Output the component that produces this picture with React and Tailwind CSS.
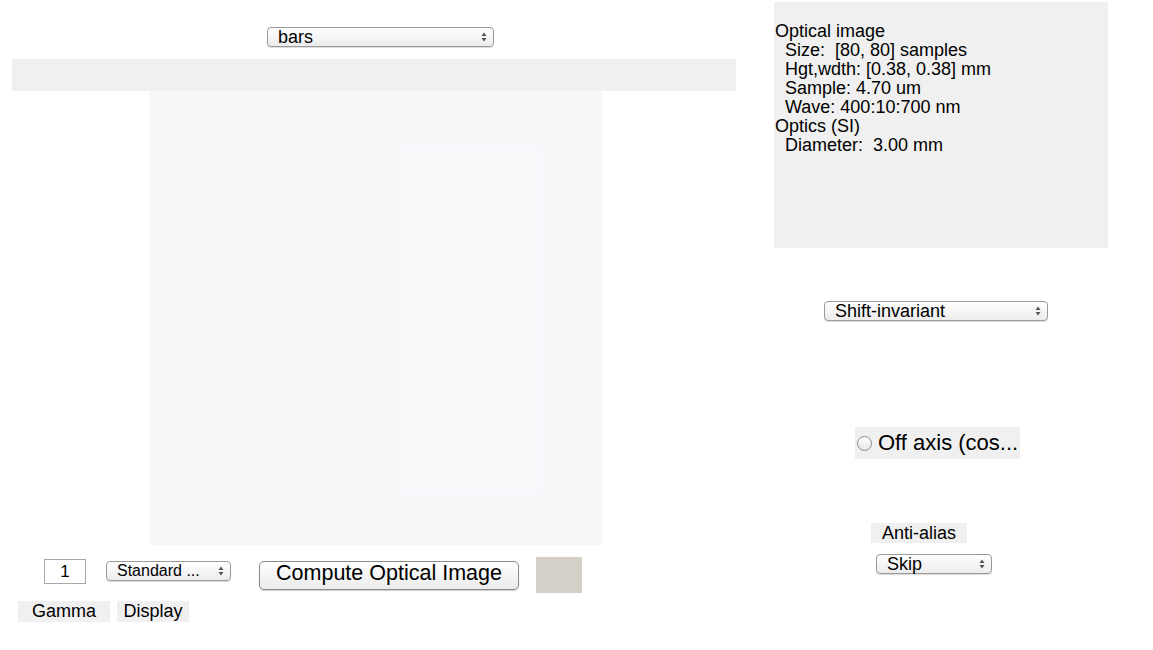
import React from "react";

function MacSelect({ label, className = "", textClass = "text-[18px]" }) {
  return (
    <div
      className={`flex items-center justify-between rounded-[4px] border border-[#9a9a9a] bg-gradient-to-b from-white to-[#ececec] pl-[10px] pr-[6px] shadow-[0_1px_1px_rgba(0,0,0,0.15)] ${className}`}
    >
      <span className={`${textClass} leading-none text-black`}>{label}</span>
      <svg width="6" height="10" viewBox="0 0 6 10">
        <path d="M3 0.5 L5.5 4 L0.5 4 Z" fill="#555" />
        <path d="M3 9.5 L5.5 6 L0.5 6 Z" fill="#555" />
      </svg>
    </div>
  );
}

export default function App() {
  return (
    <div
      className="flex h-[650px] w-[1153px] bg-white text-black"
      style={{ fontFamily: '"Liberation Sans", Arial, sans-serif' }}
    >
      {/* Left column */}
      <div className="flex w-[774px] flex-col">
        <div className="mt-[27px] flex">
          <MacSelect label="bars" className="ml-[267px] h-[20px] w-[227px]" />
        </div>
        <div className="ml-[12px] mt-[12px] h-[32px] w-[724px] bg-[#f0f0f0]" />
        <div className="ml-[149px] flex h-[454px] w-[453px] bg-[#f8f8f8]">
          <div className="ml-[244px] mt-[36px] flex h-[385px] w-[152px] bg-[#f8f8fb]">
            <div className="mx-[5px] my-[18px] flex-1 border border-[#f6f6fa] bg-[#f9f9fc]" />
          </div>
        </div>
        <div className="mt-[12px] flex items-start">
          <div className="ml-[44px] mt-[2px] flex h-[25px] w-[42px] items-center justify-center border border-[#a8a8a8] bg-white text-[17px]">
            1
          </div>
          <MacSelect
            label="Standard ..."
            className="ml-[20px] mt-[4px] h-[20px] w-[125px]"
            textClass="text-[16px]"
          />
          <button className="ml-[28px] mt-[4px] flex h-[29px] w-[260px] items-center justify-center rounded-[5px] border border-[#8a8a8a] bg-gradient-to-b from-white to-[#ebebeb] pb-[3px] text-[21.5px] leading-none shadow-[0_1px_1px_rgba(0,0,0,0.2)]">
            Compute Optical Image
          </button>
          <div className="ml-[17px] h-[36px] w-[46px] bg-[#d4d0c8]" />
        </div>
        <div className="mt-[8px] flex">
          <div className="ml-[18px] flex h-[21px] w-[92px] items-center justify-center bg-[#f0f0f0] text-[18px]">
            Gamma
          </div>
          <div className="ml-[7px] flex h-[21px] w-[72px] items-center justify-center bg-[#f0f0f0] text-[18px]">
            Display
          </div>
        </div>
      </div>

      {/* Right column */}
      <div className="flex flex-col">
        <div className="mt-[2px] h-[246px] w-[334px] bg-[#f0f0f0] pl-[1px] pt-[20px] text-[18px] leading-[19px] whitespace-pre">
          <div>Optical image</div>
          <div>{"  Size:  [80, 80] samples"}</div>
          <div>{"  Hgt,wdth: [0.38, 0.38] mm"}</div>
          <div>{"  Sample: 4.70 um"}</div>
          <div>{"  Wave: 400:10:700 nm"}</div>
          <div>Optics (SI)</div>
          <div>{"  Diameter:  3.00 mm"}</div>
        </div>
        <MacSelect label="Shift-invariant" className="ml-[50px] mt-[53px] h-[20px] w-[224px]" />
        <div className="ml-[81px] mt-[106px] flex h-[32px] w-[165px] items-center bg-[#f0f0f0]">
          <div className="ml-[2px] h-[15px] w-[15px] rounded-full border border-[#8a8a8a] bg-gradient-to-b from-white to-[#e6e6e6]" />
          <span className="ml-[6px] text-[22px] leading-none">Off axis (cos...</span>
        </div>
        <div className="ml-[97px] mt-[64px] flex h-[20px] w-[96px] items-center justify-center bg-[#f0f0f0] text-[18px]">
          Anti-alias
        </div>
        <MacSelect label="Skip" className="ml-[102px] mt-[11px] h-[20px] w-[116px]" />
      </div>
    </div>
  );
}
